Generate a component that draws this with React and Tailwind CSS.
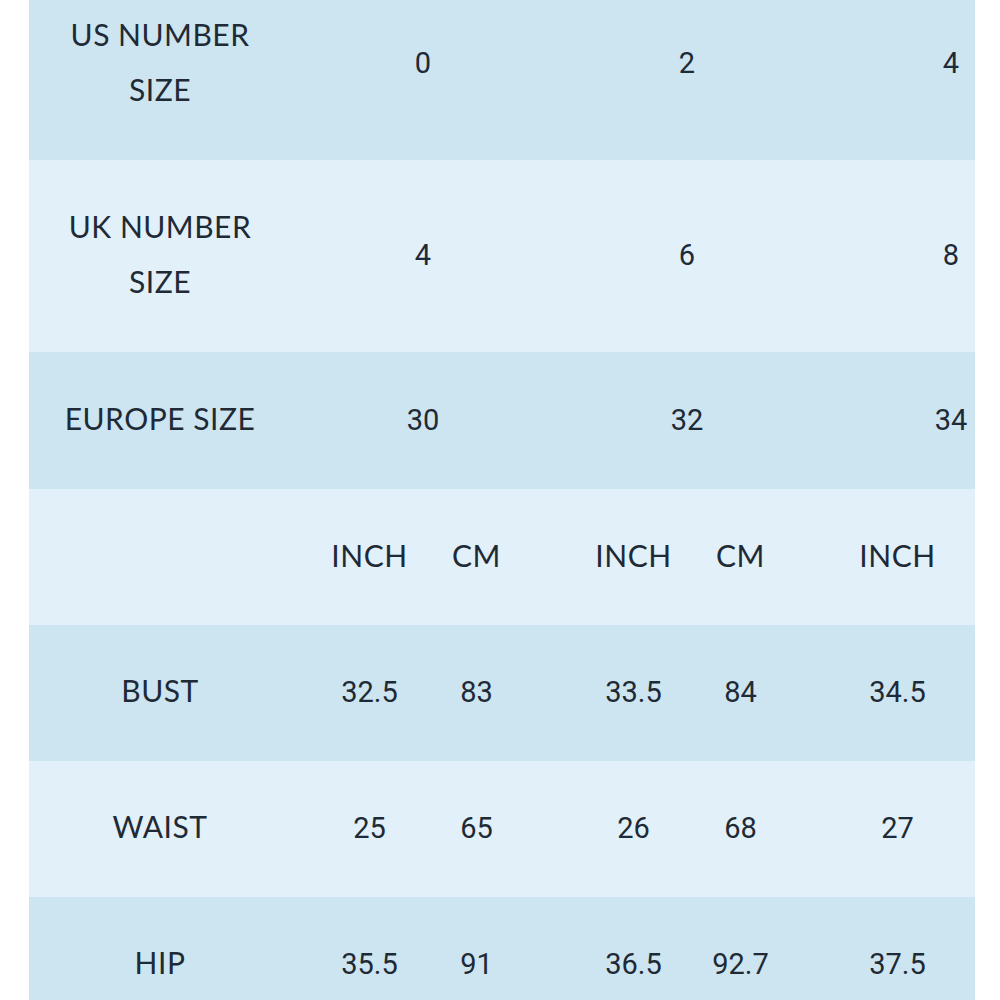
const label = "font-['Lato','Noto_Sans',sans-serif] text-[30px] leading-[55px] tracking-[0.5px] text-[#1e2a35]";
const num = "font-['Roboto','Liberation_Sans',sans-serif] text-[29px] text-[#1e2a35]";

const dark = 'bg-[#cde5f1]';
const light = 'bg-[#e2f0f9]';

const sizeRows = [
    { lines: ['US NUMBER', 'SIZE'], values: ['0', '2', '4'], bg: dark, h: 'h-[192px]' },
    { lines: ['UK NUMBER', 'SIZE'], values: ['4', '6', '8'], bg: light, h: 'h-[192px]' },
    { lines: ['EUROPE SIZE'], values: ['30', '32', '34'], bg: dark, h: 'h-[137px]' },
];

// 3列目のCMは画面外なので値なし
const measureRows = [
    { name: 'BUST', values: [['32.5', '83'], ['33.5', '84'], ['34.5', '']], bg: dark },
    { name: 'WAIST', values: [['25', '65'], ['26', '68'], ['27', '']], bg: light },
    { name: 'HIP', values: [['35.5', '91'], ['36.5', '92.7'], ['37.5', '']], bg: dark },
];

const Pair = ({ a, b, cls }) => (
    <div className="w-[264px] shrink-0 flex justify-center">
        <div className={`w-[107px] text-center ${cls}`}>{a}</div>
        <div className={`w-[107px] text-center ${cls}`}>{b}</div>
    </div>
);

export default function App() {
    return (
        <div className="w-[1000px] h-[1000px] overflow-hidden bg-white">
            <div className="ml-[29px] w-[946px] overflow-hidden -mt-[32px]">
                <div className="w-[1054px]">
                    {sizeRows.map((row, i) => (
                        <div key={i} className={`flex items-center ${row.h} ${row.bg}`}>
                            <div className="w-[262px] shrink-0 flex flex-col items-center pb-[5px]">
                                {row.lines.map(l => (
                                    <div key={l} className={label}>{l}</div>
                                ))}
                            </div>
                            {row.values.map((v, j) => (
                                <div key={j} className={`w-[264px] shrink-0 text-center ${num}`}>{v}</div>
                            ))}
                        </div>
                    ))}

                    {/* 単位の見出し */}
                    <div className={`flex items-center h-[136px] ${light}`}>
                        <div className="w-[262px] shrink-0" />
                        {['CM', 'CM', ''].map((b, j) => (
                            <div key={j} className="pb-[4px]">
                                <Pair a="INCH" b={b} cls={label} />
                            </div>
                        ))}
                    </div>

                    {measureRows.map(row => (
                        <div key={row.name} className={`flex items-center h-[136px] ${row.bg}`}>
                            <div className={`w-[262px] shrink-0 text-center pb-[5px] ${label}`}>{row.name}</div>
                            {row.values.map((p, j) => (
                                <Pair key={j} a={p[0]} b={p[1]} cls={num} />
                            ))}
                        </div>
                    ))}
                </div>
            </div>
        </div>
    );
}
